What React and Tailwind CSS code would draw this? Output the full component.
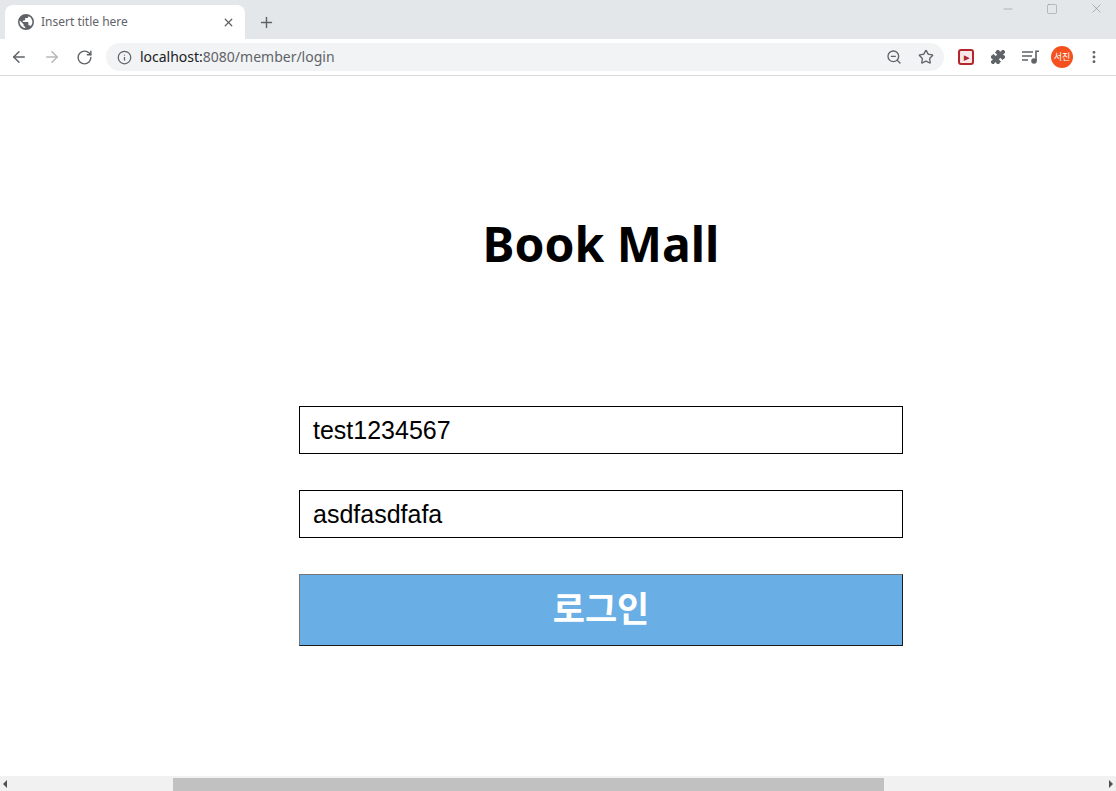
import { ArrowLeft, ArrowRight, RotateCw, Info, ZoomOut, Star, Puzzle, X, Plus, Minus, Square, EllipsisVertical } from 'lucide-react';

const GlobeIcon = () => (
  <svg width="16" height="16" viewBox="0 0 16 16" className="shrink-0">
    <path
      fill="#5f6368"
      d="M8 0a8 8 0 1 0 0 16A8 8 0 0 0 8 0ZM7.2 14.3A6.4 6.4 0 0 1 1.8 6.4L5.6 10.2V11c0 .9.7 1.6 1.6 1.6v1.7Zm5.5-2a1.6 1.6 0 0 0-1.5-1.1h-.8V8.8a.8.8 0 0 0-.8-.8H4.8V6.4h1.6a.8.8 0 0 0 .8-.8V4h1.6c.9 0 1.6-.7 1.6-1.6v-.3a6.4 6.4 0 0 1 2.3 10.2Z"
    />
  </svg>
);

const PlaylistIcon = () => (
  <svg width="18" height="14" viewBox="0 0 18 14" fill="none" stroke="#5f6368" strokeWidth="1.6">
    <path d="M0 2h11M0 6h10M0 10h6" />
    <path d="M14 11V1.2h3" />
    <circle cx="12" cy="11" r="2" fill="#5f6368" />
  </svg>
);

const LoginApp = () => {
  return (
    <div className="w-[1116px] h-[791px] overflow-hidden flex flex-col bg-white font-['Liberation_Sans',sans-serif]">
      {/* Tab strip */}
      <div className="h-[39px] shrink-0 bg-[#e4e7ea] flex items-end pl-[5px] relative">
        <div className="w-[240px] h-[34px] bg-white rounded-t-lg flex items-center pl-[13px] pr-[10px] font-['Noto_Sans',sans-serif]">
          <GlobeIcon />
          <span className="ml-[7px] text-xs text-[#5f6368] flex-1">Insert title here</span>
          <X size={13} strokeWidth={2.4} className="text-[#5f6368]" />
        </div>
        <Plus size={17} strokeWidth={2} className="text-[#5f6368] ml-[13px] mb-[8px]" />
        <div className="absolute top-[1px] right-[12px] flex items-center gap-[31px] text-[#8a8d91]">
          <Minus size={14} strokeWidth={1} />
          <Square size={12} strokeWidth={1} />
          <X size={15} strokeWidth={1} />
        </div>
      </div>

      {/* Address bar */}
      <div className="h-[37px] shrink-0 bg-white border-b border-[#d9dadc] flex items-center pl-[10px] pr-[14px]">
        <ArrowLeft size={18} strokeWidth={2} className="text-[#5f6368]" />
        <ArrowRight size={18} strokeWidth={2} className="text-[#b6b8bb] ml-[15px]" />
        <RotateCw size={17} strokeWidth={2} className="text-[#5f6368] ml-[15px]" />
        <div className="ml-[13px] w-[840px] h-[28px] bg-[#f1f3f4] rounded-full flex items-center pl-[11px] pr-[10px]">
          <Info size={15} strokeWidth={2} className="text-[#5f6368]" />
          <span className="ml-[8px] text-sm flex-1 font-['Noto_Sans',sans-serif] text-[#5f6368]">
            <span className="text-[#202124]">localhost:</span>8080/member/login
          </span>
          <ZoomOut size={16} strokeWidth={2} className="text-[#5f6368]" />
          <Star size={16} strokeWidth={2} className="text-[#5f6368] ml-[16px]" />
        </div>
        <div className="ml-[14px] w-[16px] h-[16px] rounded-[3px] border-2 border-[#b3262b] bg-[#fbe9e9] flex items-center justify-center">
          <span className="text-[7px] leading-none text-[#b3262b] font-bold">▶</span>
        </div>
        <Puzzle size={16} fill="#5f6368" strokeWidth={1.5} className="text-[#5f6368] ml-[16px]" />
        <div className="ml-[16px] flex"><PlaylistIcon /></div>
        <div className="ml-[11px] w-[22px] h-[22px] rounded-full bg-[#f4511e] text-white text-[9px] flex items-center justify-center font-['Noto_Sans_CJK_KR',sans-serif]">서진</div>
        <EllipsisVertical size={16} strokeWidth={2.4} className="text-[#5f6368] ml-[13px]" />
      </div>

      {/* Page */}
      <main className="flex-1 min-h-0 pl-[299px]">
        <div className="w-[604px] flex flex-col">
          <h1 className="mt-[135px] h-[65px] text-center text-[48px] leading-[65px] font-bold text-black font-['Noto_Sans','Noto_Sans_CJK_KR',sans-serif]">Book Mall</h1>
          <input
            readOnly
            value="test1234567"
            className="mt-[130px] h-[48px] w-full border border-black px-[13px] text-[25px] text-black outline-none"
          />
          <input
            readOnly
            value="asdfasdfafa"
            className="mt-[36px] h-[48px] w-full border border-black px-[13px] text-[25px] text-black outline-none"
          />
          <button className="mt-[36px] h-[72px] w-full border border-t-[#767676] border-l-[#767676] border-b-[#1a1a1a] border-r-[#1a1a1a] bg-[#6aaee6] text-white text-[35px] font-bold font-['Liberation_Sans','Noto_Sans_CJK_KR',sans-serif]">
            로그인
          </button>
        </div>
      </main>

      {/* Horizontal scrollbar */}
      <div className="h-[15px] shrink-0 bg-[#f1f1f1] flex items-center justify-between px-[3px] relative">
        <span className="w-0 h-0 border-y-[4px] border-y-transparent border-r-[4px] border-r-[#505050]" />
        <div className="absolute left-[173px] top-[2px] w-[711px] h-[13px] bg-[#c1c1c1]" />
        <span className="w-0 h-0 border-y-[4px] border-y-transparent border-l-[4px] border-l-[#505050]" />
      </div>
    </div>
  );
};

export default LoginApp;
